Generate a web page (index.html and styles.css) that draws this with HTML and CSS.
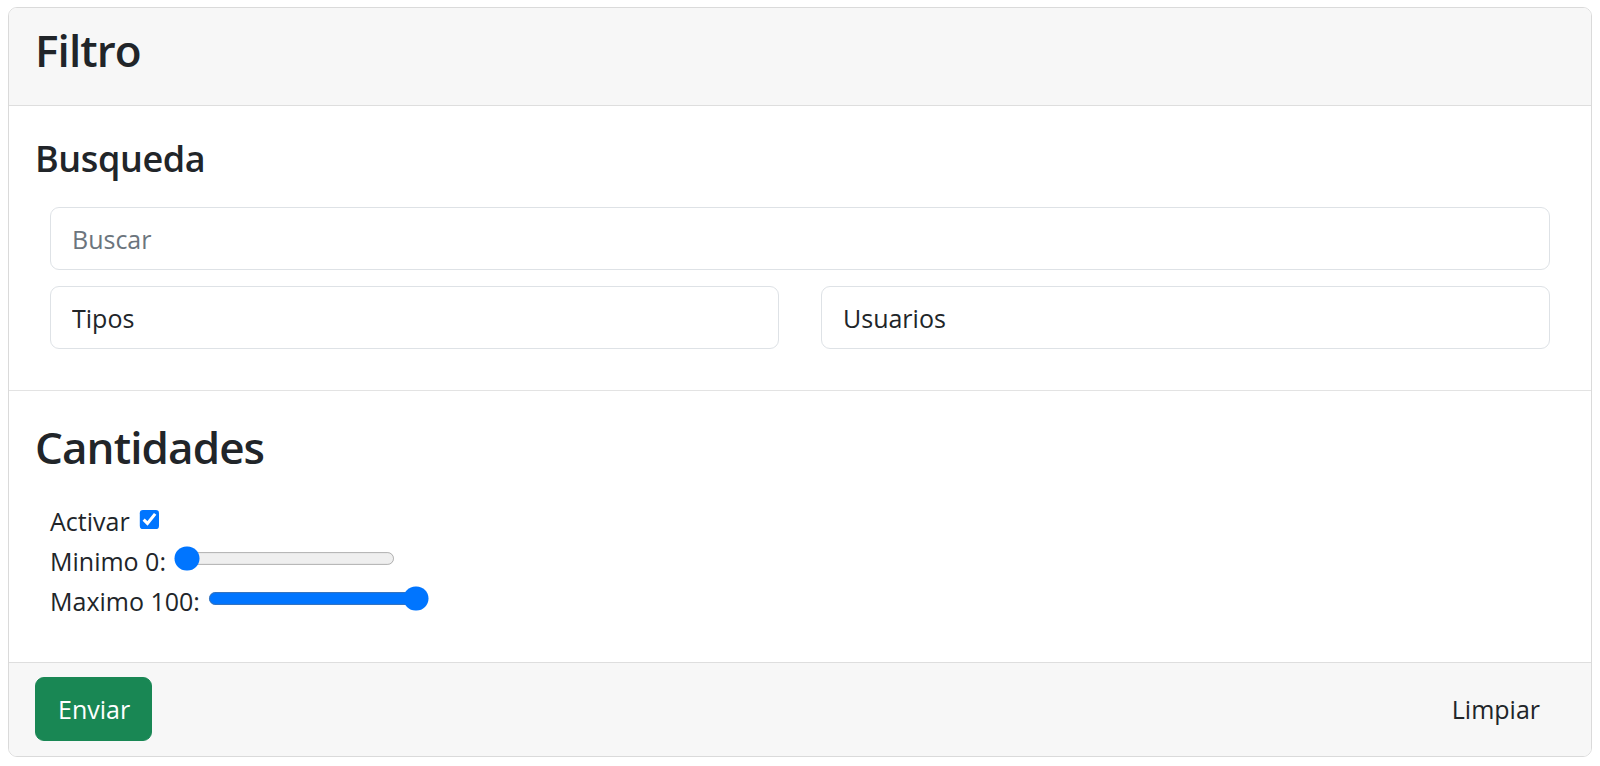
FILE: index.html
```html
<!DOCTYPE html>
<html lang="es">
<head>
<meta charset="utf-8">
<title>Filtro</title>
<link rel="stylesheet" href="styles.css">
</head>
<body>
<div class="card">
  <div class="card-header">
    <h2 class="title">Filtro</h2>
  </div>
  <div class="card-body section-search">
    <h4 class="subtitle">Busqueda</h4>
    <div class="fields">
      <input class="form-control" type="text" placeholder="Buscar">
      <div class="field-row">
        <input class="form-control" type="text" value="Tipos">
        <input class="form-control" type="text" value="Usuarios">
      </div>
    </div>
  </div>
  <div class="card-body section-amounts">
    <h2 class="title">Cantidades</h2>
    <div class="controls">
      <label class="ctrl-row">Activar <input class="check" type="checkbox" checked></label>
      <label class="ctrl-row">Minimo 0: <input class="range" type="range" min="0" max="100" value="0"></label>
      <label class="ctrl-row">Maximo 100: <input class="range range-max" type="range" min="0" max="100" value="100"></label>
    </div>
  </div>
  <div class="card-footer">
    <button class="btn btn-success" type="button">Enviar</button>
    <button class="btn btn-plain" type="button">Limpiar</button>
  </div>
</div>
</body>
</html>
```

FILE: styles.css
```css
html, body {
  background: #ffffff;
}

body {
  margin: 7px 8px 0 8px;
  font-family: "Open Sans", "Noto Sans", "DejaVu Sans", sans-serif;
  color: #212529;
  font-size: 25px;
}

.card {
  border: 1px solid #dadada;
  border-radius: 9px;
  overflow: hidden;
  background: #ffffff;
}

.card-header {
  background: #f7f7f7;
  border-bottom: 1px solid #dedede;
  height: 98px;
  box-sizing: border-box;
  padding: 16px 26px 0 26px;
}

.title {
  margin: 0;
  font-size: 44px;
  line-height: 52.8px;
  font-weight: 600;
  letter-spacing: -0.9px;
  color: #212529;
}

.subtitle {
  margin: 0;
  font-size: 36px;
  line-height: 43.2px;
  font-weight: 600;
  letter-spacing: -0.4px;
  color: #212529;
}

.card-body {
  padding: 0 26px;
}

.section-search {
  height: 285px;
  box-sizing: border-box;
  padding-top: 31px;
  border-bottom: 1px solid #e3e3e3;
}

.fields {
  margin: 27px 15px 0 15px;
  display: flex;
  flex-direction: column;
  gap: 16px;
}

.field-row {
  display: grid;
  grid-template-columns: 1fr 1fr;
  column-gap: 42px;
}

.form-control {
  display: block;
  box-sizing: border-box;
  width: 100%;
  height: 63px;
  padding: 0 21px;
  border: 1px solid #dee2e6;
  border-radius: 9px;
  background: #ffffff;
  font-family: inherit;
  font-size: 25px;
  color: #212529;
  outline: none;
}

.form-control::placeholder {
  color: #6c757d;
}

.section-amounts {
  height: 271px;
  box-sizing: border-box;
  padding-top: 30px;
}

.controls {
  margin: 27px 15px 0 15px;
  display: flex;
  flex-direction: column;
}

.ctrl-row {
  display: flex;
  align-items: center;
  height: 40px;
  line-height: 40px;
  font-size: 25px;
}

.check {
  zoom: 1.6;
  margin: 0 0 1px 6px;
}

.range {
  zoom: 1.6;
  width: 138px;
  margin: 0 0 3px 5px;
}

.card-footer {
  background: #f7f7f7;
  border-top: 1px solid #dedede;
  padding: 14px 26px 15px 26px;
  display: flex;
  justify-content: space-between;
  align-items: center;
}

.btn {
  font-family: inherit;
  font-size: 25px;
  height: 64px;
  border-radius: 9px;
  border: 1px solid transparent;
  padding: 0 22px;
  cursor: pointer;
}

.btn-success {
  background: #198754;
  border-color: #198754;
  color: #ffffff;
  width: 117px;
}

.btn-plain {
  background: transparent;
  color: #212529;
  padding: 0 24px;
}
```
